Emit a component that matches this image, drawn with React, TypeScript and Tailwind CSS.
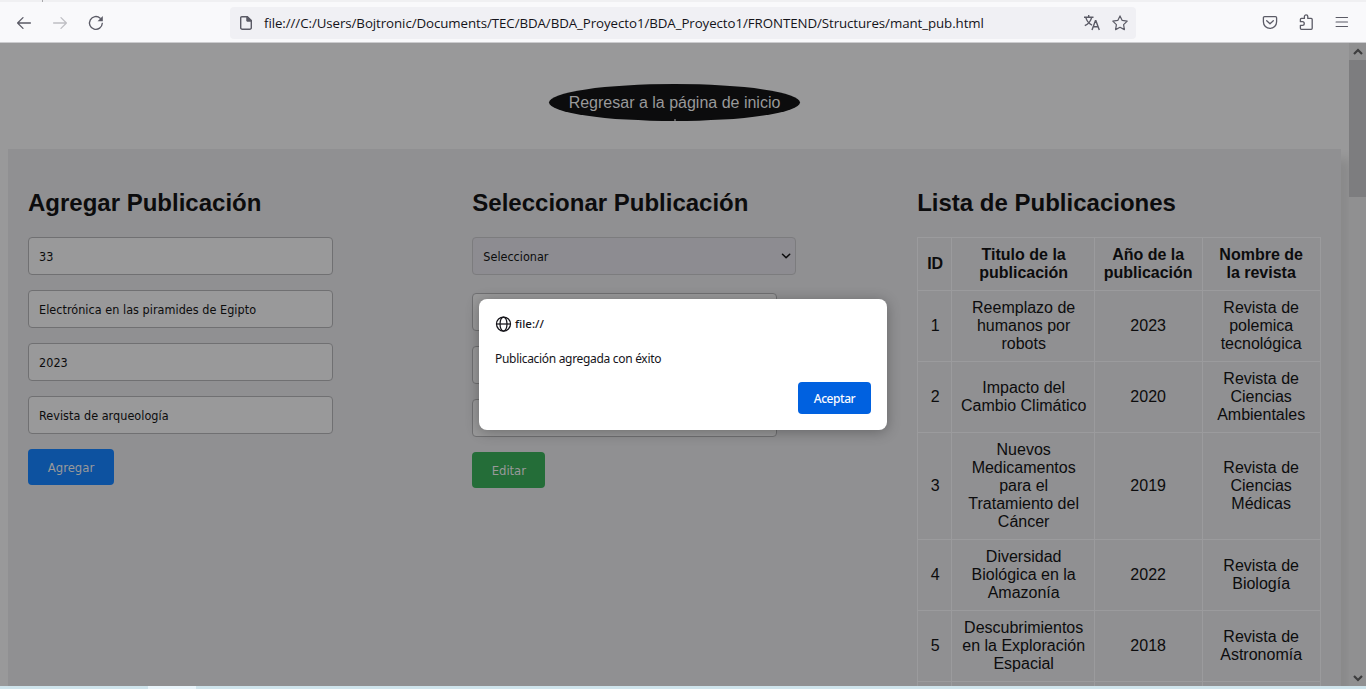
import React from "react";

const rows = [
  ["1", ["Reemplazo de", "humanos por", "robots"], "2023", ["Revista de", "polemica", "tecnológica"]],
  ["2", ["Impacto del", "Cambio Climático"], "2020", ["Revista de", "Ciencias", "Ambientales"]],
  ["3", ["Nuevos", "Medicamentos", "para el", "Tratamiento del", "Cáncer"], "2019", ["Revista de", "Ciencias", "Médicas"]],
  ["4", ["Diversidad", "Biológica en la", "Amazonía"], "2022", ["Revista de", "Biología"]],
  ["5", ["Descubrimientos", "en la Exploración", "Espacial"], "2018", ["Revista de", "Astronomía"]],
  ["", [], "", []],
] as [string, string[], string, string[]][];

const cell = "border border-[#9b9b9d] p-2 text-center align-middle";
const shiftedCell = "border border-[#9b9b9d] py-2 pr-[7px] pl-[9px] text-center align-middle";

function Lines({ items }: { items: string[] }) {
  return (
    <>
      {items.map((t) => (
        <span key={t} className="block whitespace-nowrap">{t}</span>
      ))}
    </>
  );
}

function Field({ value = "" }: { value?: string }) {
  return (
    <div className="mb-[15px] flex h-[38px] w-[305px] items-center rounded-[4px] border border-[#707072] bg-[#99999a] px-[10px] pt-[2px] font-['DejaVu_Sans_Condensed','DejaVu_Sans',sans-serif] text-[12.5px] text-[#0c0c0d]">
      <span className="whitespace-nowrap tracking-[0.035px]">{value}</span>
    </div>
  );
}

function Heading({ children }: { children: React.ReactNode }) {
  return <h2 className="mb-5 h-7 whitespace-nowrap text-2xl leading-7 font-bold">{children}</h2>;
}

function Toolbar() {
  return (
    <header className="flex h-[43px] shrink-0 flex-col border-b border-[#cccccf] bg-[#f9f9fb] font-['Open_Sans','Noto_Sans',sans-serif]">
      <div className="flex h-[2px] shrink-0 bg-[#f0f0f2]">
        <div className="ml-[42px] w-px bg-[#a8a8ab]" />
      </div>
      <div className="flex h-10 items-center pt-px text-[#5b5b66]">
        <svg className="ml-4 h-4 w-4" viewBox="0 0 16 16" fill="none" stroke="currentColor" strokeWidth="1.3" strokeLinecap="round" strokeLinejoin="round">
          <path d="M14.4 8H1.6M7 2.6 1.6 8 7 13.4" />
        </svg>
        <svg className="ml-5 h-4 w-4 text-[#bfbfc4]" viewBox="0 0 16 16" fill="none" stroke="currentColor" strokeWidth="1.3" strokeLinecap="round" strokeLinejoin="round">
          <path d="M1.6 8h12.8M9 2.6 14.4 8 9 13.4" />
        </svg>
        <svg className="ml-5 h-4 w-4" viewBox="0 0 16 16" fill="none" stroke="currentColor" strokeWidth="1.35" strokeLinecap="round">
          <path d="M14.3 8.3A6.4 6.4 0 1 1 12.2 3.2" />
          <path d="M14.8 1.1v5.2H9.6z" fill="currentColor" stroke="none" />
        </svg>
        <div className="ml-[126px] flex h-8 w-[906px] items-center rounded-[4px] bg-[#f0f0f4]">
          <svg className="ml-2 h-4 w-4" viewBox="0 0 16 16" fill="none" stroke="currentColor" strokeWidth="1.4" strokeLinejoin="round">
            <path d="M3.8 1.7h5.6l3.9 3.9v7.1a1.6 1.6 0 0 1-1.6 1.6H4.3a1.6 1.6 0 0 1-1.6-1.6V2.8a1.1 1.1 0 0 1 1.1-1.1zM9.2 1.9v3.9h3.9" />
            <path d="M9.2 1.9v3.9h3.9z" fill="currentColor" />
          </svg>
          <span className="ml-[10px] whitespace-nowrap text-[13.3px] leading-5 tracking-[-0.076px] text-[#15141a]">
            file:///C:/Users/Bojtronic/Documents/TEC/BDA/BDA_Proyecto1/BDA_Proyecto1/FRONTEND/Structures/mant_pub.html
          </span>
          <svg className="ml-auto h-4 w-4" viewBox="0 0 16 16" fill="none" stroke="currentColor" strokeWidth="1.4">
            <path d="M0 2.2h9.5M4.7 0v2.2M1.8 2.4C2.8 6.2 5.5 9 8 10.2M7.7 2.4C6.8 5.9 4 9.2.8 10.7M8 15l3.4-9.2h.5L15.3 15M9.2 11.8h5" />
          </svg>
          <svg className="mr-2 ml-3 h-4 w-4" viewBox="0 0 16 16" fill="none" stroke="currentColor" strokeWidth="1.2" strokeLinejoin="round">
            <path d="m8 .9 2.2 4.5 5 .7-3.6 3.5.8 5L8 12.3l-4.4 2.3.8-5L.8 6.1l5-.7z" />
          </svg>
        </div>
        <svg className="ml-[126px] h-4 w-4" viewBox="0 0 16 16" fill="none" stroke="currentColor" strokeWidth="1.3" strokeLinecap="round" strokeLinejoin="round">
          <path d="M2.6 1.6h10.8a1.2 1.2 0 0 1 1.2 1.2v4a6.6 6.6 0 0 1-13.2 0v-4a1.2 1.2 0 0 1 1.2-1.2z" />
          <path d="M4.7 5.7 8 8.8l3.3-3.1" />
        </svg>
        <svg className="ml-5 h-4 w-4 overflow-visible" viewBox="0 0 16 16" fill="none" stroke="currentColor" strokeWidth="1.3" strokeLinejoin="round">
          <path d="M2.4 6.7V4.4a1 1 0 0 1 1-1h3V1.6a1.7 1.7 0 0 1 3.4 0v1.8h3.4a1 1 0 0 1 1 1v8.9a1 1 0 0 1-1 1H3.4a1 1 0 0 1-1-1v-2.9h2a1.8 1.8 0 0 0 0-3.7z" />
        </svg>
        <svg className="ml-5 h-4 w-4" viewBox="0 0 16 16" fill="none" stroke="currentColor" strokeWidth="1.2" strokeLinecap="round">
          <path d="M2.1 2.5h11.4M2.1 7h11.4M2.1 11.5h11.4" />
        </svg>
      </div>
    </header>
  );
}

function Scrollbar() {
  return (
    <aside className="flex w-[17px] shrink-0 flex-col items-center bg-[#909091]">
      <div className="flex h-[17px] items-center text-[#3d3d3e]">
        <svg className="h-2 w-[10px]" viewBox="0 0 10 8" fill="none" stroke="currentColor" strokeWidth="2.2"><path d="m1 6 4-4 4 4" /></svg>
      </div>
      <div className="h-[137px] w-full bg-[#7d7d7f]" />
      <div className="mt-auto flex h-[17px] items-center text-[#3d3d3e]">
        <svg className="h-2 w-[10px]" viewBox="0 0 10 8" fill="none" stroke="currentColor" strokeWidth="2.2"><path d="m1 2 4 4 4-4" /></svg>
      </div>
    </aside>
  );
}

function Alert() {
  return (
    <div role="alertdialog" className="absolute top-[256px] left-[479px] flex h-[131px] w-[408px] flex-col rounded-[8px] bg-white px-4 pt-4 pb-4 font-['Noto_Sans',sans-serif] text-[12px] text-[#15141a] shadow-[0_2px_14px_rgba(0,0,0,0.3)]">
      <div className="flex h-[17px] items-center">
        <svg className="h-4 w-[17px]" viewBox="0 0 16 16" fill="none" stroke="currentColor" strokeWidth="1.25">
          <circle cx="8" cy="8" r="7" />
          <ellipse cx="8" cy="8" rx="3.5" ry="7" />
          <path d="M1 8h14" />
        </svg>
        <span className="ml-[3px] text-[11.5px] font-medium">file://</span>
      </div>
      <p className="mt-[18px] h-[17px] leading-[17px] tracking-[-0.31px] whitespace-nowrap">Publicación agregada con éxito</p>
      <button className="mt-auto flex h-8 w-[73px] items-center justify-center self-end rounded-[4px] bg-[#0061e0] pt-px text-[12px] font-medium tracking-[-0.45px] text-[#fbfbfe]">Aceptar</button>
    </div>
  );
}

export default function App() {
  return (
    <div className="flex h-[689px] w-[1366px] flex-col overflow-hidden">
      <Toolbar />
      <div className="relative flex h-[643px] shrink-0 overflow-hidden bg-[#99999a] font-['Liberation_Sans',Arial,sans-serif] text-[#0c0c0d]">
        <main className="flex min-w-0 flex-1 flex-col overflow-hidden px-2">
          <div className="flex h-[106px] shrink-0 justify-center pt-[41px]">
            <a className="relative flex h-[37px] w-[251px] items-center justify-center rounded-[50%] bg-[#0c0c0d] text-[16px] text-[#99999a]">
              Regresar a la página de inicio
              <span className="absolute bottom-0 left-[125px] h-[2px] w-[2px] bg-[#5a5a5b]" />
            </a>
          </div>
          <section className="grid h-[700px] shrink-0 grid-cols-3 gap-10 bg-[#909092] px-5 pt-10 shadow-[10px_10px_10px_rgba(0,0,0,0.1)]">
            <div>
              <Heading>Agregar Publicación</Heading>
              <Field value="33" />
              <Field value="Electrónica en las piramides de Egipto" />
              <Field value="2023" />
              <Field value="Revista de arqueología" />
              <button className="h-9 w-[86px] rounded-[4px] bg-[#0d52a0] pt-[2px] font-['DejaVu_Sans_Condensed','DejaVu_Sans',sans-serif] text-[13px] text-[#99999a]">Agregar</button>
            </div>
            <div>
              <Heading>Seleccionar Publicación</Heading>
              <div className="mb-[18px] flex h-[38px] w-[324px] items-center justify-between rounded-[4px] border border-[#7c7c7e] bg-[#8d8c91] pr-1 pl-[10px] font-['DejaVu_Sans_Condensed','DejaVu_Sans',sans-serif] text-[12.5px]">
                <span className="pt-[2px]">Seleccionar</span>
                <svg className="h-[10px] w-[10px]" viewBox="0 0 10 10" fill="none" stroke="currentColor" strokeWidth="1.5" strokeLinecap="round" strokeLinejoin="round"><path d="m1.5 3.2 3.6 3.6 3.6-3.6" /></svg>
              </div>
              <Field />
              <Field />
              <Field />
              <button className="h-9 w-[73px] rounded-[4px] bg-[#246d38] pt-[2px] font-['DejaVu_Sans_Condensed','DejaVu_Sans',sans-serif] text-[13px] tracking-[-0.1px] text-[#99999a]">Editar</button>
            </div>
            <div>
              <Heading><span className="pl-[0.5px]">Lista de Publicaciones</span></Heading>
              <table className="w-[404px] table-fixed border-collapse text-[16px] leading-[18px]">
                <colgroup>
                  <col className="w-[34px]" />
                  <col className="w-[143px]" />
                  <col className="w-[108px]" />
                  <col className="w-[118px]" />
                </colgroup>
                <thead>
                  <tr>
                    <th className={shiftedCell}>ID</th>
                    <th className={shiftedCell}><Lines items={["Titulo de la", "publicación"]} /></th>
                    <th className={cell}><Lines items={["Año de la", "publicación"]} /></th>
                    <th className={cell}><Lines items={["Nombre de", "la revista"]} /></th>
                  </tr>
                </thead>
                <tbody>
                  {rows.map(([id, title, year, journal], i) => (
                    <tr key={i}>
                      <td className={shiftedCell}>{id}</td>
                      <td className={shiftedCell}><Lines items={title} /></td>
                      <td className={cell}>{year}</td>
                      <td className={cell}><Lines items={journal} /></td>
                    </tr>
                  ))}
                </tbody>
              </table>
            </div>
          </section>
        </main>
        <Scrollbar />
        <Alert />
      </div>
      <footer className="flex h-[3px] shrink-0 bg-[#cfe4ec]">
        <div className="ml-[148px] w-12 bg-[#eaf5fb]" />
      </footer>
    </div>
  );
}
